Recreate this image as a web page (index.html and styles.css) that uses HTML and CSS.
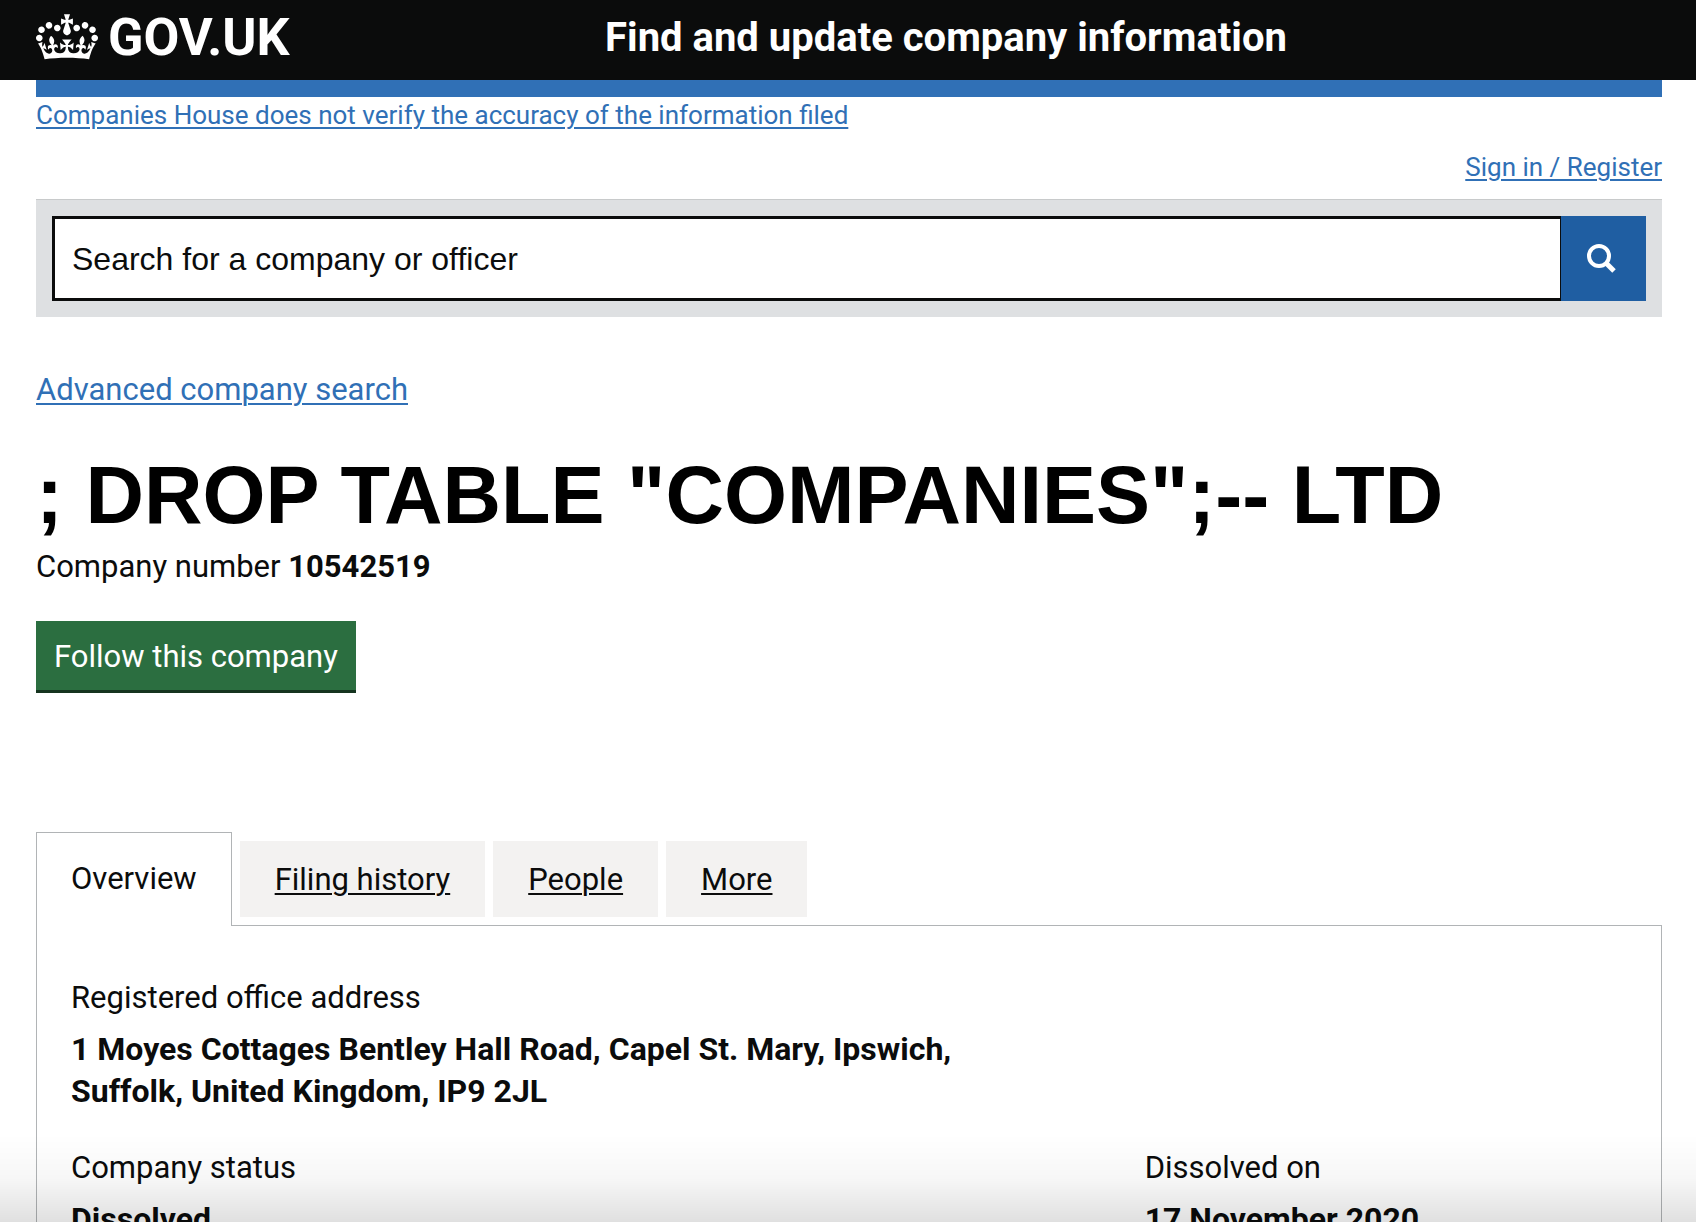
FILE: index.html
```
<!DOCTYPE html>
<html lang="en">

<head>
  <meta charset="UTF-8">
  <meta name="viewport" content="width=device-width, initial-scale=1.0">
  <title>; DROP TABLE "COMPANIES";-- LTD - Find and update company information - GOV.UK</title>
  <link rel="stylesheet" href="styles.css">
</head>

<body>
  <header class="header">
    <a class="logo" href="#">
      <svg class="crown" viewBox="0 0 132 97" aria-hidden="true">
        <path fill="currentColor" fill-rule="evenodd" d="M25 30.2c3.5 1.5 7.7-.2 9.1-3.7 1.5-3.6-.2-7.8-3.9-9.2-3.6-1.4-7.6.3-9.1 3.9-1.4 3.5.3 7.5 3.9 9zM9 39.5c3.6 1.5 7.8-.2 9.2-3.7 1.5-3.6-.2-7.8-3.9-9.1-3.6-1.5-7.6.2-9.1 3.8-1.4 3.5.3 7.5 3.8 9zM4.4 57.2c3.5 1.5 7.7-.2 9.1-3.8 1.5-3.6-.2-7.7-3.9-9.1-3.5-1.5-7.6.3-9.1 3.8-1.4 3.5.3 7.6 3.9 9.1zm38.3-21.4c3.5 1.5 7.7-.2 9.1-3.8 1.5-3.6-.2-7.7-3.9-9.1-3.6-1.5-7.6.3-9.1 3.8-1.3 3.6.4 7.7 3.9 9.1zm64.4-5.6c-3.6 1.5-7.8-.2-9.1-3.7-1.5-3.6.2-7.8 3.8-9.2 3.6-1.4 7.7.3 9.2 3.9 1.3 3.5-.4 7.5-3.9 9zm15.9 9.3c-3.6 1.5-7.7-.2-9.1-3.7-1.5-3.6.2-7.8 3.7-9.1 3.6-1.5 7.7.2 9.2 3.8 1.5 3.5-.3 7.5-3.8 9zm4.7 17.7c-3.6 1.5-7.8-.2-9.2-3.8-1.5-3.6.2-7.7 3.9-9.1 3.6-1.5 7.7.3 9.2 3.8 1.3 3.5-.4 7.6-3.9 9.1zM89.3 35.8c-3.6 1.5-7.8-.2-9.2-3.8-1.4-3.6.2-7.7 3.9-9.1 3.6-1.5 7.7.3 9.2 3.8 1.4 3.6-.3 7.7-3.9 9.1zM69.7 17.7l8.9 4.7V9.3l-8.9 2.8c-.2-.3-.5-.6-.9-.9L72.4 0H59.6l3.5 11.2c-.3.3-.6.5-.9.9l-8.8-2.8v13.1l8.8-4.7c.3.3.6.7.9.9l-5 15.4v.1c-.2.8-.4 1.6-.4 2.4 0 4.1 3.1 7.5 7 8.1h.2c.3 0 .7.1 1 .1.4 0 .7 0 1-.1h.2c4-.6 7.1-4.1 7.1-8.1 0-.8-.1-1.7-.4-2.4V34l-5.1-15.4c.4-.2.7-.6 1-.9zM66 92.8c16.9 0 32.8 1.1 47.1 3.2 4-16.9 8.9-26.7 14-33.5l-9.6-3.4c1 4.9 1.1 7.2 0 10.2-1.5-1.4-3-4.3-4.2-8.7L108.6 76c2.8-2 5-3.2 7.5-3.3-4.4 9.4-10 11.9-13.6 11.2-4.3-.8-6.3-4.6-5.6-7.9 1-4.7 5.7-5.9 8-.5 4.3-8.7-3-11.4-7.6-8.8 7.1-7.2 7.9-13.5 2.1-21.1-8 6.1-8.1 12.3-4.5 20.8-4.7-5.4-12.1-2.5-9.5 6.2 3.4-5.2 7.9-2 7.2 3.1-.6 4.3-6.4 7.8-13.5 7.2-10.3-.9-10.9-8-11.2-13.8 2.5-.5 7.1 1.8 11 7.3L80.2 60c-4.1 4.4-8 5.3-12.3 5.4 1.4-4.4 8-11.6 8-11.6H55.5s6.4 7.2 7.9 11.6c-4.2-.1-8-1-12.3-5.4l1.4 16.4c3.9-5.5 8.5-7.7 10.9-7.3-.3 5.8-.9 12.8-11.1 13.8-7.2.6-12.9-2.9-13.5-7.2-.7-5 3.8-8.3 7.1-3.1 2.7-8.7-4.6-11.6-9.4-6.2 3.7-8.5 3.6-14.7-4.6-20.8-5.8 7.6-5 13.9 2.2 21.1-4.7-2.6-11.9.1-7.7 8.8 2.3-5.5 7.1-4.2 8.1.5.7 3.3-1.3 7.1-5.7 7.9-3.5.7-9-1.8-13.5-11.2 2.5.1 4.7 1.3 7.5 3.3l-4.7-15.4c-1.2 4.4-2.7 7.2-4.3 8.7-1.1-3-.9-5.3 0-10.2l-9.5 3.4c5 6.9 9.9 16.7 14 33.5 14.8-2.1 30.8-3.2 47.7-3.2z"/>
      </svg>
      <span class="logotype">GOV.UK</span>
    </a>
    <a class="service-name" href="#">Find and update company information</a>
  </header>

  <main class="container">
    <div class="notice">
      <a class="link" href="#">Companies House does not verify the accuracy of the information filed</a>
    </div>
    <nav class="account">
      <a class="link" href="#">Sign in / Register</a>
    </nav>

    <form class="search" role="search">
      <input class="search-input" type="search" name="q" aria-label="Search for a company or officer" placeholder="Search for a company or officer">
      <button class="search-button" type="button" aria-label="Search">
        <svg class="search-icon" viewBox="0 0 30 30" aria-hidden="true">
          <circle cx="12" cy="12" r="10" fill="none" stroke="currentColor" stroke-width="4"/>
          <path d="M19 19l8 8" fill="none" stroke="currentColor" stroke-width="5"/>
        </svg>
      </button>
    </form>

    <p class="advanced"><a class="link" href="#">Advanced company search</a></p>

    <h1 class="company-name">; DROP TABLE "COMPANIES";-- LTD</h1>
    <p class="company-number">Company number <strong>10542519</strong></p>

    <button class="follow" type="button">Follow this company</button>

    <ul class="tabs">
      <li class="tab tab-selected"><a href="#overview">Overview</a></li>
      <li class="tab"><a href="#">Filing history</a></li>
      <li class="tab"><a href="#">People</a></li>
      <li class="tab"><a href="#">More</a></li>
    </ul>

    <section class="panel" id="overview">
      <dl class="field address">
        <dt>Registered office address</dt>
        <dd>1 Moyes Cottages Bentley Hall Road, Capel St. Mary, Ipswich, Suffolk, United Kingdom, IP9 2JL</dd>
      </dl>
      <div class="columns">
        <dl class="field">
          <dt>Company status</dt>
          <dd>Dissolved</dd>
        </dl>
        <dl class="field">
          <dt>Dissolved on</dt>
          <dd>17 November 2020</dd>
        </dl>
      </div>
    </section>
  </main>
  <div class="shade"></div>
</body>

</html>
```
FILE: styles.css
```
* {
  box-sizing: border-box;
}

body {
  margin: 0;
  height: 100vh;
  overflow: hidden;
  font-family: Roboto, "Liberation Sans", sans-serif;
  font-size: 31px;
  line-height: 42px;
  color: #0b0c0c;
  background: #fff;
}

.header {
  display: flex;
  align-items: center;
  height: 80px;
  padding: 0 34px 4px 36px;
  background: #0b0c0c;
}

.header a {
  color: #fff;
  font-weight: 700;
  text-decoration: none;
}

.logo {
  display: flex;
  align-items: center;
  flex: 0 0 35%;
  gap: 10px;
}

.crown {
  width: 62px;
  height: 46px;
  margin-bottom: 3px;
}

.logotype {
  font-size: 52px;
}

.service-name {
  font-size: 40px;
}

.container {
  margin: 0 34px 0 36px;
}

.link {
  color: #3070b6;
  text-decoration-thickness: 2px;
  text-underline-offset: 3px;
}

.notice {
  border-top: 17px solid #3070b6;
  padding-top: 2px;
  font-size: 26px;
  line-height: 32px;
}

.account {
  margin-top: 20px;
  font-size: 26px;
  line-height: 32px;
  text-align: right;
}

.search {
  display: flex;
  margin-top: 16px;
  padding: 16px;
  border-top: 1px solid #c8cacb;
  background: #dee0e2;
}

.search-input {
  flex: 1;
  height: 85px;
  padding: 2px 17px 0;
  border: 3px solid #0b0c0c;
  border-right-width: 1px;
  border-radius: 0;
  background: #fff;
  font-family: "Liberation Sans", Arial, sans-serif;
  font-size: 32px;
  appearance: none;
}

.search-input::placeholder {
  color: #0b0c0c;
}

.search-button {
  display: flex;
  align-items: center;
  justify-content: center;
  width: 85px;
  padding: 0 4px 0 0;
  border: 0;
  background: #1f5ea2;
  color: #fff;
}

.search-icon {
  width: 30px;
  height: 30px;
}

.advanced {
  margin: 52px 0 42px;
}

.company-name {
  margin: 0;
  font-family: "Liberation Sans", Arial, sans-serif;
  font-size: 81px;
  line-height: 84px;
  color: #000;
}

.company-number {
  margin: 9px 0 33px;
}

.follow {
  display: block;
  padding: 15px 18px 12px;
  border: 0;
  border-bottom: 3px solid #15341f;
  background: #2b6e40;
  color: #fff;
  font: inherit;
}

.tabs {
  display: flex;
  gap: 8px;
  margin: 139px 0 0;
  padding: 0;
  list-style: none;
}

.tab {
  margin: 9px 0 8px;
  padding: 18px 35px 16px;
  background: #f3f2f1;
}

.tab a {
  color: #0b0c0c;
  text-decoration-thickness: 2px;
  text-underline-offset: 3px;
}

.tab-selected {
  margin: 0 0 -1px;
  padding: 25px 34px 26px;
  border: 1px solid #b1b4b6;
  border-bottom: 0;
  background: #fff;
}

.tab-selected a {
  text-decoration: none;
}

.panel {
  padding: 51px 34px;
  border: 1px solid #b1b4b6;
}

.field {
  margin: 0;
}

.field dd {
  margin: 9px 0 0;
  font-size: 32px;
  font-weight: 700;
}

.address {
  max-width: 940px;
  margin-bottom: 35px;
}

.columns {
  display: grid;
  grid-template-columns: 69% 1fr;
}

.shade {
  position: fixed;
  left: 0;
  right: 0;
  bottom: 0;
  height: 88px;
  background: linear-gradient(rgba(0, 0, 0, 0), rgba(0, 0, 0, .03) 50%, rgba(0, 0, 0, .12));
  pointer-events: none;
}
```
